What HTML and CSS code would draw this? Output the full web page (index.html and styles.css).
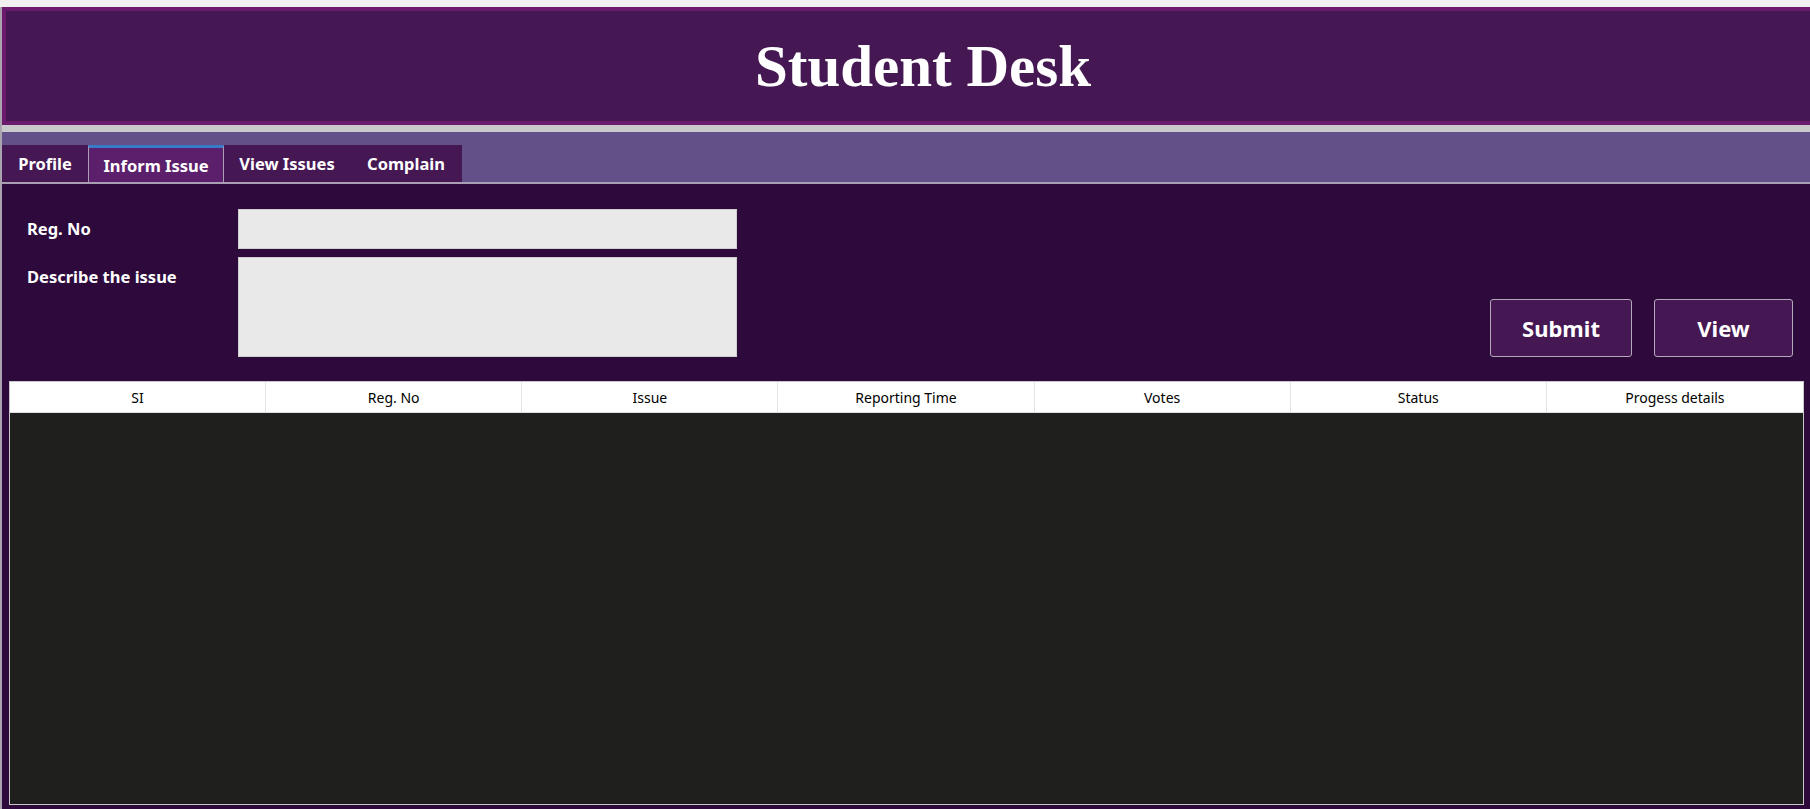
FILE: index.html
```html
<!DOCTYPE html>
<html lang="en">
<head>
<meta charset="utf-8">
<title>Student Desk</title>
<link rel="stylesheet" href="styles.css">
</head>
<body>
<div class="app">
  <header class="banner">
    <h1 class="title">Student Desk</h1>
  </header>
  <div class="sep"></div>
  <nav class="tabbar">
    <div class="tab t-profile">Profile</div>
    <div class="tab t-inform active">Inform Issue</div>
    <div class="tab t-view">View Issues</div>
    <div class="tab t-complain">Complain</div>
  </nav>
  <main class="content">
    <div class="formrow">
      <div class="form">
        <div class="field">
          <label class="label">Reg. No</label>
          <div class="input"></div>
        </div>
        <div class="field">
          <label class="label">Describe the issue</label>
          <div class="input area"></div>
        </div>
      </div>
      <div class="actions">
        <button class="btn btn-submit">Submit</button>
        <button class="btn btn-view">View</button>
      </div>
    </div>
    <div class="grid">
      <div class="ghead">
        <div class="gcol">SI</div>
        <div class="gcol">Reg. No</div>
        <div class="gcol">Issue</div>
        <div class="gcol">Reporting Time</div>
        <div class="gcol">Votes</div>
        <div class="gcol">Status</div>
        <div class="gcol">Progess details</div>
      </div>
      <div class="gbody"></div>
    </div>
  </main>
</div>
</body>
</html>
```
FILE: styles.css
```css
html, body {
  margin: 0;
  padding: 0;
  height: 100%;
  overflow: hidden;
}
body {
  background: #f0f0f0;
  padding-top: 7px;
  box-sizing: border-box;
  font-family: "Noto Sans", "Open Sans", sans-serif;
}
.app {
  display: flex;
  flex-direction: column;
  height: 802px;
  border-left: 2px solid #aaa4ae;
}
.banner {
  height: 118px;
  box-sizing: border-box;
  background: #451853;
  border: 4px solid #6b1a6e;
  border-right: none;
  display: flex;
  align-items: center;
  justify-content: center;
  padding-left: 30px;
}
.title {
  margin: 0;
  font-family: "Liberation Serif", "Times New Roman", serif;
  font-weight: bold;
  font-size: 59px;
  line-height: 1;
  color: #ffffff;
}
.sep {
  height: 7px;
  background: #c9c8cb;
}
.tabbar {
  height: 52px;
  box-sizing: border-box;
  background: #635089;
  border-bottom: 2px solid #a89fb5;
  display: flex;
  align-items: flex-end;
}
.tab {
  height: 37px;
  box-sizing: border-box;
  background: #451853;
  color: #ffffff;
  font-weight: bold;
  font-size: 16.5px;
  display: flex;
  align-items: center;
  justify-content: center;
}
.t-profile { width: 86px; }
.t-inform { width: 136px; }
.t-view { width: 126px; }
.t-complain { width: 112px; }
.tab.active {
  background: #5c1f6b;
  border-top: 3px solid #3a7bc8;
  border-left: 1px solid #a8a0b0;
  border-right: 1px solid #a8a0b0;
  padding-top: 1px;
}
.content {
  flex: 1;
  background: #2e0a3c;
  padding: 25px 6px 4px 7px;
  display: flex;
  flex-direction: column;
  min-height: 0;
}
.formrow {
  display: flex;
  justify-content: space-between;
  align-items: flex-end;
}
.form {
  display: flex;
  flex-direction: column;
  gap: 8px;
}
.field {
  display: flex;
  align-items: flex-start;
}
.label {
  width: 229px;
  box-sizing: border-box;
  padding-left: 18px;
  padding-top: 9px;
  color: #ffffff;
  font-weight: bold;
  font-size: 16.5px;
  line-height: 22px;
}
.input {
  width: 499px;
  height: 40px;
  box-sizing: border-box;
  background: #e9e9e9;
  border: 1px solid #cfcfcf;
}
.input.area {
  height: 100px;
}
.actions {
  display: flex;
  gap: 22px;
  margin-right: 11px;
}
.btn {
  height: 58px;
  box-sizing: border-box;
  background: #451853;
  border: 1px solid #b4a8bc;
  border-radius: 3px;
  color: #ffffff;
  font-family: "Noto Sans", "Open Sans", sans-serif;
  font-weight: bold;
  font-size: 22px;
  padding: 0;
}
.btn-submit { width: 142px; }
.btn-view { width: 139px; }
.grid {
  margin-top: 24px;
  flex: 1;
  display: flex;
  flex-direction: column;
  border: 1px solid #c8c8c8;
  min-height: 0;
}
.ghead {
  display: grid;
  grid-template-columns: repeat(7, 1fr);
  background: #ffffff;
  height: 30px;
  border-bottom: 1px solid #e0e0e0;
}
.gcol {
  display: flex;
  align-items: center;
  justify-content: center;
  font-size: 14px;
  color: #000000;
  border-right: 1px solid #e4e4e4;
}
.gcol:last-child {
  border-right: none;
}
.gbody {
  flex: 1;
  background: #1f201e;
}
```
